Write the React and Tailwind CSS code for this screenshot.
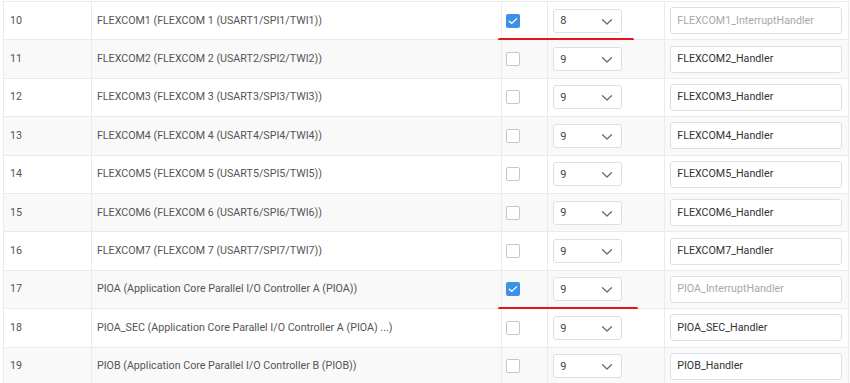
import React from "react"

const rows = [
  { id: 10, name: "FLEXCOM1 (FLEXCOM 1 (USART1/SPI1/TWI1))", on: true, pri: "8", handler: "FLEXCOM1_InterruptHandler", mark: "w-[136px] left-[494px]" },
  { id: 11, name: "FLEXCOM2 (FLEXCOM 2 (USART2/SPI2/TWI2))", pri: "9", handler: "FLEXCOM2_Handler" },
  { id: 12, name: "FLEXCOM3 (FLEXCOM 3 (USART3/SPI3/TWI3))", pri: "9", handler: "FLEXCOM3_Handler" },
  { id: 13, name: "FLEXCOM4 (FLEXCOM 4 (USART4/SPI4/TWI4))", pri: "9", handler: "FLEXCOM4_Handler" },
  { id: 14, name: "FLEXCOM5 (FLEXCOM 5 (USART5/SPI5/TWI5))", pri: "9", handler: "FLEXCOM5_Handler" },
  { id: 15, name: "FLEXCOM6 (FLEXCOM 6 (USART6/SPI6/TWI6))", pri: "9", handler: "FLEXCOM6_Handler" },
  { id: 16, name: "FLEXCOM7 (FLEXCOM 7 (USART7/SPI7/TWI7))", pri: "9", handler: "FLEXCOM7_Handler" },
  { id: 17, name: "PIOA (Application Core Parallel I/O Controller A (PIOA))", on: true, pri: "9", handler: "PIOA_InterruptHandler", mark: "w-[140px] left-[494px]" },
  { id: 18, name: "PIOA_SEC (Application Core Parallel I/O Controller A (PIOA) ...)", pri: "9", handler: "PIOA_SEC_Handler" },
  { id: 19, name: "PIOB (Application Core Parallel I/O Controller B (PIOB))", pri: "9", handler: "PIOB_Handler" },
]

function Chevron() {
  return (
    <svg width="12" height="8" viewBox="0 0 12 8" fill="none" stroke="#6b6b6b" strokeWidth="1.3" strokeLinecap="round" strokeLinejoin="round">
      <path d="M1.5 1.8 6 6 10.5 1.8" />
    </svg>
  )
}

function Checkbox({ on }) {
  if (on) {
    return (
      <div className="w-[14px] h-[14px] rounded-[2px] bg-[#3d90e8] flex items-center justify-center">
        <svg width="10" height="8" viewBox="0 0 10 8" fill="none" stroke="#ffffff" strokeWidth="1.3" strokeLinecap="round" strokeLinejoin="round">
          <path d="M1.3 4.2 3.8 6.4 8.7 1.6" />
        </svg>
      </div>
    )
  }
  return <div className="w-[14px] h-[14px] rounded-[2px] border border-[#c4c7cd] bg-white" />
}

export default function App() {
  return (
    <div className="w-[850px] h-[383px] overflow-hidden bg-white pt-[1px] pl-[3px]" style={{ fontFamily: "Roboto, 'Open Sans', sans-serif" }}>
      <div className="relative w-[846px] border-t border-l border-[#ebebeb] text-[10.7px] text-[#555]">
        {rows.map((r, i) => (
          <div key={r.id} className={`relative flex h-[38.4px] border-b border-[#ebebeb] ${i % 2 ? "bg-[#f9f9f9]" : "bg-white"}`}>
            <div className="w-[88px] flex items-center pl-[6px] border-r border-[#ebebeb]">{r.id}</div>
            <div className="w-[411px] flex items-center pl-[5px] border-r border-[#ebebeb] whitespace-nowrap">{r.name}</div>
            <div className="w-[46px] flex items-center pl-[4px] border-r border-[#ebebeb]">
              <Checkbox on={r.on} />
            </div>
            <div className="w-[117px] flex items-center pl-[5px] border-r border-[#ebebeb]">
              <div className="w-[69px] h-[24px] bg-white border border-[#dcdfe6] rounded-[3px] flex items-center justify-between pl-[6px] pr-[8px] pt-[2px] text-[11px] text-[#444]">
                <span>{r.pri}</span>
                <Chevron />
              </div>
            </div>
            <div className="w-[184px] flex items-center pl-[5px] border-r border-[#ebebeb]">
              <div className={`w-[172px] h-[27px] bg-white border border-[#dcdfe6] rounded-[3px] flex items-center pl-[6px] ${r.on ? "text-[#a8a8a8]" : "text-[#333]"}`}>
                {r.handler}
              </div>
            </div>
            {r.mark && <div className={`absolute bottom-[-2px] h-[3px] rounded-full bg-[#e3141c] ${r.mark}`} />}
          </div>
        ))}
      </div>
    </div>
  )
}
